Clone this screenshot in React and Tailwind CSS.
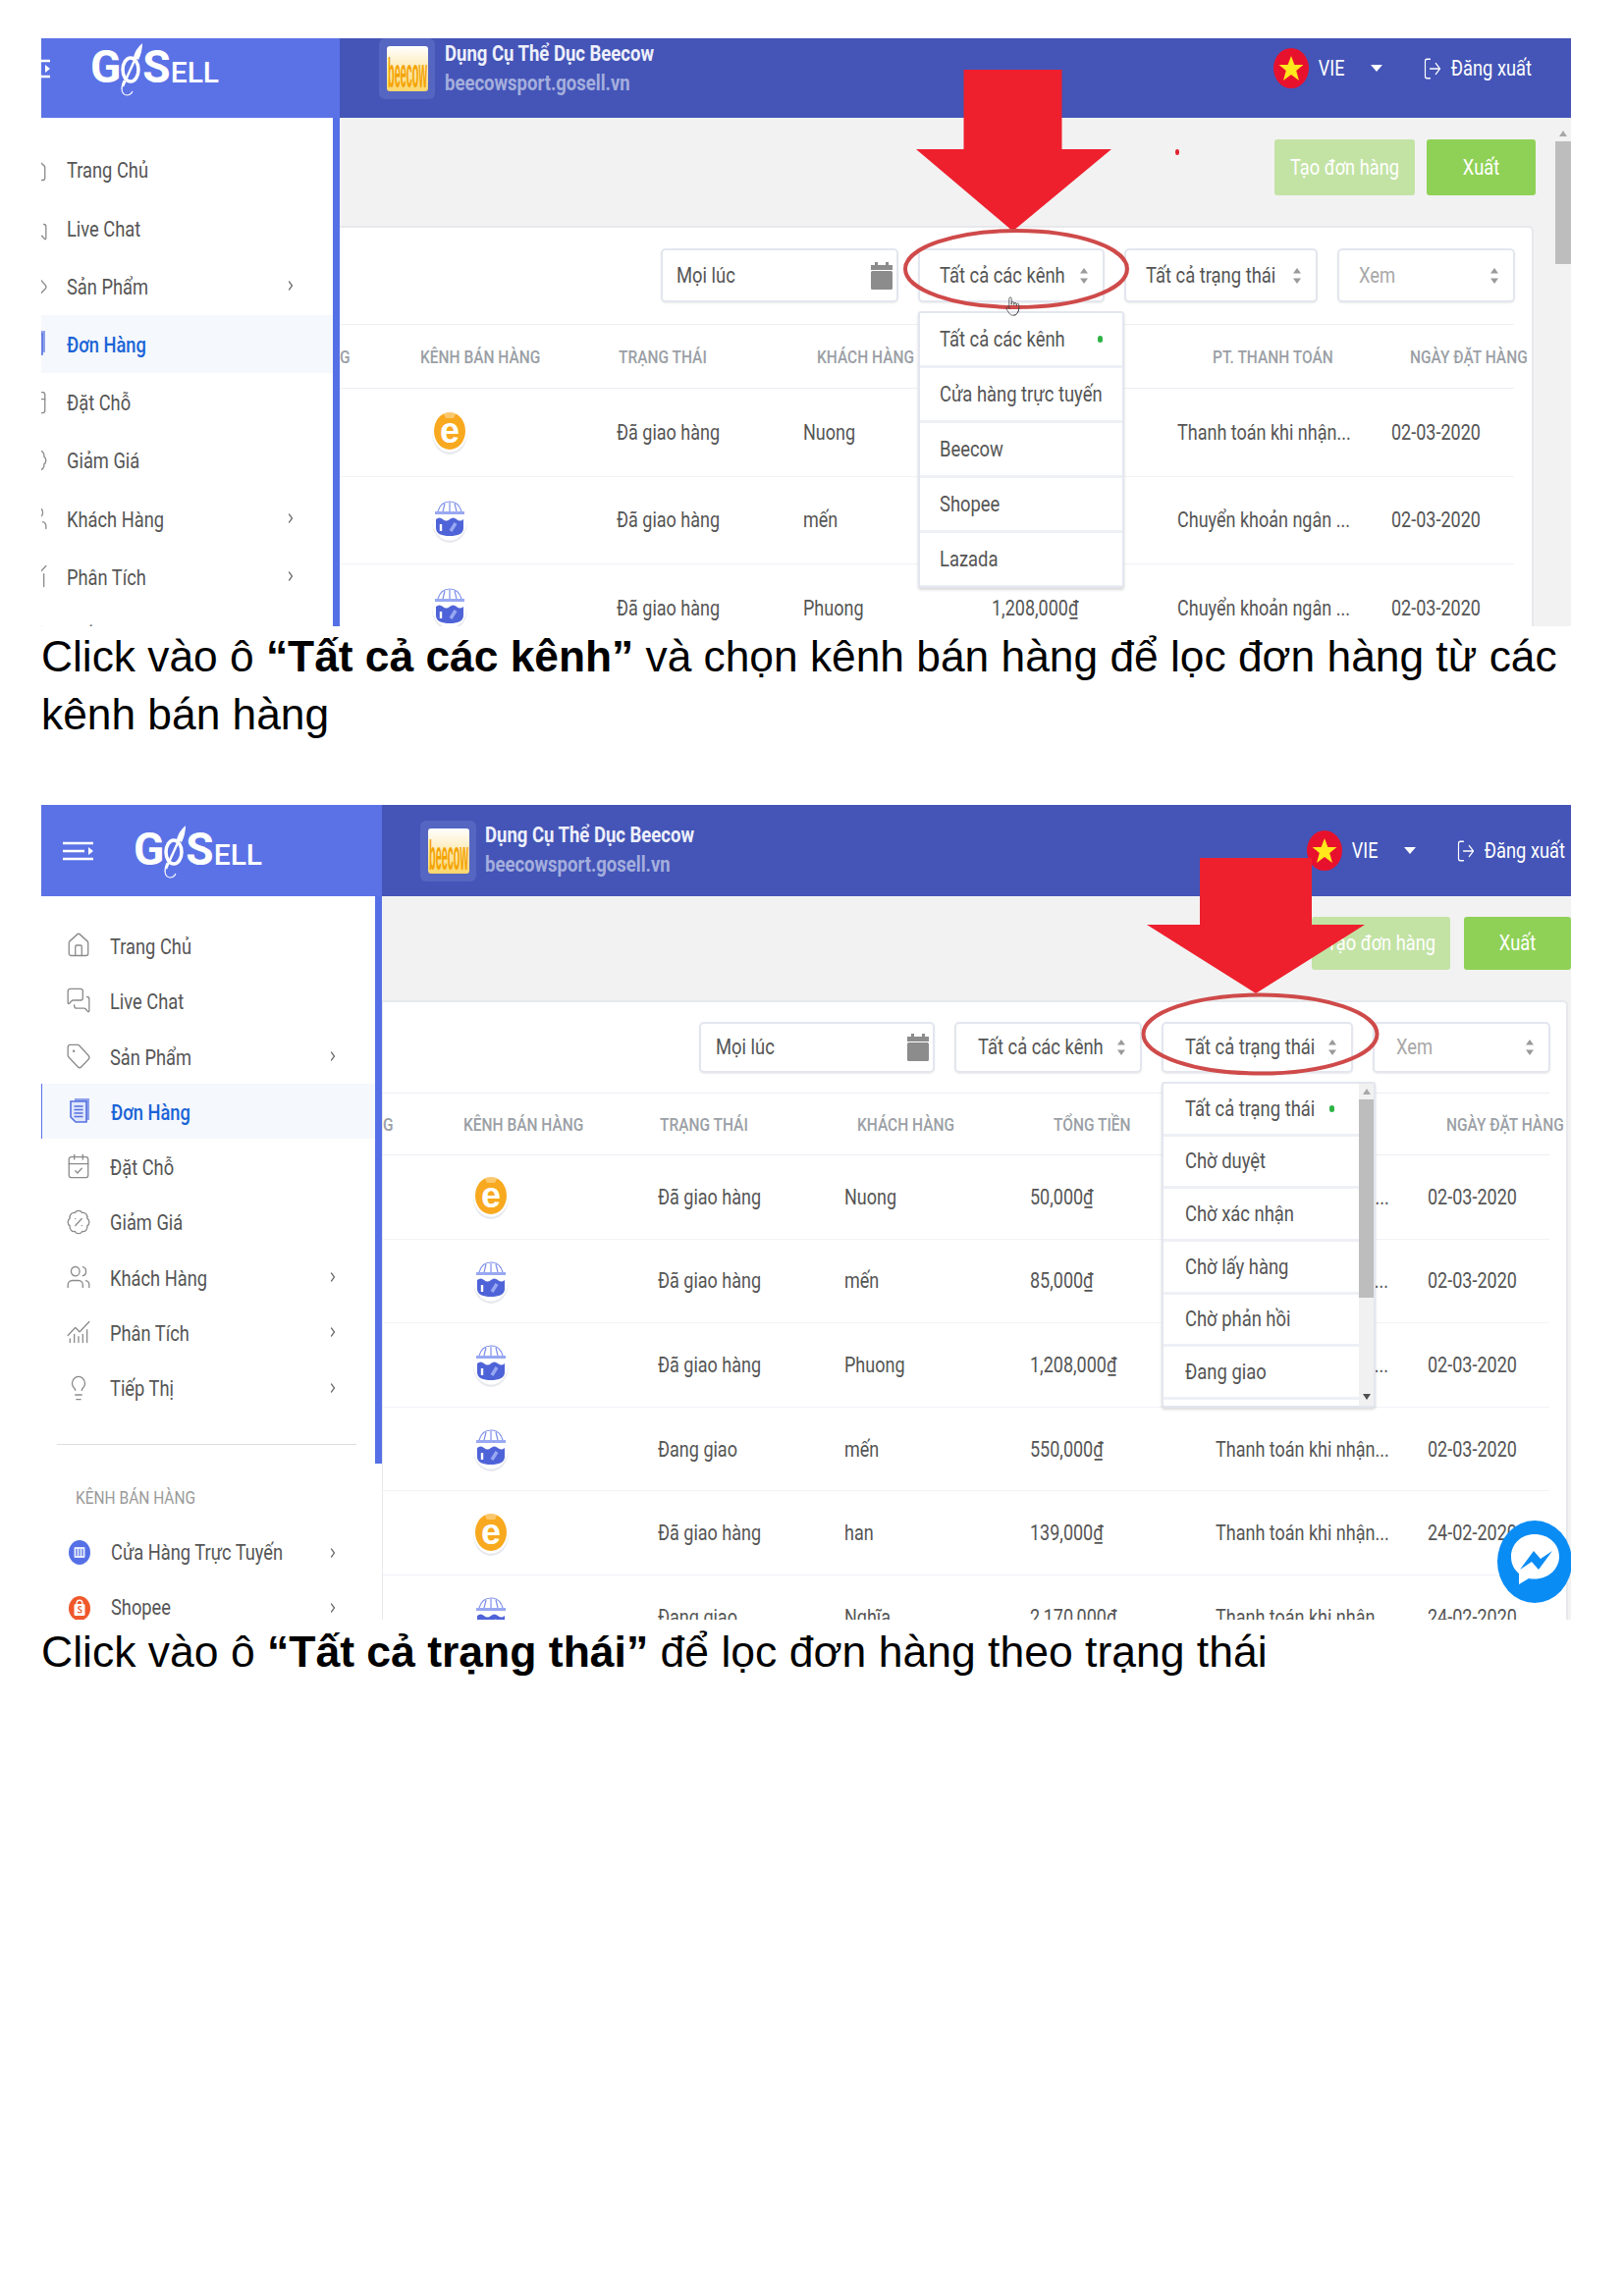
import React from 'react';
import {
    BadgePercent, CalendarCheck, ChartNoAxesCombined, ChevronRight, Home, Lightbulb,
    LogOut, MessagesSquare, Pointer, Tag, Users
} from 'lucide-react';

// all text in the source is stretched vertically, so text gets a fixed y scale
function T({ className = '', children }) {
    return <span className={`inline-block scale-y-[1.22] whitespace-nowrap ${className}`}>{children}</span>;
}

function OrdersIcon({ className }) {
    return (
        <svg className={className} viewBox="0 0 26 28" preserveAspectRatio="none">
            <path d="M8 1h15v22h-3V4H8z" fill="#8ea2ec" />
            <path d="M4 4h16v21H9l-5-5z" fill="#dfe6fb" stroke="#5570e0" strokeWidth="1.6" />
            <path d="M7.500 9h9M7.500 12.500h9M7.500 16h9M7.500 19.500h9" stroke="#5570e0" strokeWidth="1.5" />
        </svg>
    );
}

const MENU = [
    { label: 'Trang Chủ', icon: Home },
    { label: 'Live Chat', icon: MessagesSquare },
    { label: 'Sản Phẩm', icon: Tag, more: true },
    { label: 'Đơn Hàng', icon: OrdersIcon, active: true },
    { label: 'Đặt Chỗ', icon: CalendarCheck },
    { label: 'Giảm Giá', icon: BadgePercent },
    { label: 'Khách Hàng', icon: Users, more: true },
    { label: 'Phân Tích', icon: ChartNoAxesCombined, more: true },
    { label: 'Tiếp Thị', icon: Lightbulb, more: true }
];

const COD = 'Thanh toán khi nhận...';
const BANK = 'Chuyển khoản ngân ...';

const ORDERS = [
    { channel: 'beecow', status: 'Đã giao hàng', customer: 'Nuong', total: '50,000₫', pay: COD, date: '02-03-2020' },
    { channel: 'store', status: 'Đã giao hàng', customer: 'mến', total: '85,000₫', pay: BANK, date: '02-03-2020' },
    { channel: 'store', status: 'Đã giao hàng', customer: 'Phuong', total: '1,208,000₫', pay: BANK, date: '02-03-2020' },
    { channel: 'store', status: 'Đang giao', customer: 'mến', total: '550,000₫', pay: COD, date: '02-03-2020' },
    { channel: 'beecow', status: 'Đã giao hàng', customer: 'han', total: '139,000₫', pay: COD, date: '24-02-2020' },
    { channel: 'store', status: 'Đang giao', customer: 'Nghĩa', total: '2,170,000₫', pay: COD, date: '24-02-2020' }
];

const FIRST = {
    panel: 'h-[599px]',
    header: 'h-[81px] pb-[20px]',
    brand: 'w-[304px] h-[81px] pb-[20px]',
    burger: '-ml-[22px]',
    shop: 'pl-[40px] gap-[10px]',
    names: 'mt-[3px]',
    account: 'pr-[40px]',
    sideWidth: 'w-[304px]',
    nav: 'pt-[23px]',
    row: 'h-[59.2px]',
    rowIcon: '-ml-[19px]',
    active: '',
    bar: 'h-full',
    main: '',
    topbar: 'h-[110px] pt-[22px] pr-[20px]',
    createBtn: 'w-[143px] h-[57px]',
    exportBtn: 'w-[111px] h-[57px] ml-[12px]',
    card: 'mr-[22px]',
    filters: 'pt-[21px] pb-[22px] pr-[17px] gap-[20px]',
    filterH: 'h-[55px]',
    filterW: ['w-[242px]', 'w-[190px]', 'w-[197px]', 'w-[181px]'],
    selectPad: 'pl-[20px]',
    datePad: '!pl-[14px]',
    table: 'mr-[18px]',
    head: 'h-[66px] pt-[3px] grid-cols-[82px_202px_202px_202px_201px_201px_minmax(0,1fr)]',
    cells: 'h-[89.5px] grid-cols-[282px_190px_192px_189px_218px_minmax(0,1fr)]',
    iconCell: 'pl-[94px] mt-[2px]'
};

const SECOND = {
    panel: 'h-[830px]',
    header: 'h-[93px]',
    brand: 'w-[347px] h-[93px]',
    burger: 'ml-[22px]',
    shop: 'pl-[39px] gap-[9px]',
    names: '',
    account: 'pr-[6px]',
    sideWidth: 'w-[347px]',
    nav: 'pt-[22px]',
    row: 'h-[56.3px]',
    rowIcon: 'ml-[25px]',
    active: 'border-l border-[#5b72e6]',
    bar: 'h-[578px]',
    main: 'border-b-2 border-[#e4e4e4]',
    topbar: 'h-[106px] pt-[21px]',
    createBtn: 'w-[141px] h-[54px]',
    exportBtn: 'w-[109px] h-[54px] ml-[14px]',
    card: 'mr-[3px] border-l',
    filters: 'pt-[20px] pb-[20px] pr-[16px] gap-[20px]',
    filterH: 'h-[52px]',
    filterW: ['w-[240px]', 'w-[191px]', 'w-[195px]', 'w-[181px]'],
    selectPad: 'pl-[22px]',
    datePad: '!pl-[15px]',
    table: 'mr-[17px]',
    head: 'h-[64px] pt-[3px] grid-cols-[82px_200px_201px_200px_201px_199px_minmax(0,1fr)]',
    cells: 'h-[85.6px] grid-cols-[280px_190px_189px_189px_216px_minmax(0,1fr)]',
    iconCell: 'pl-[92px] mt-[2px]'
};

function Burger({ className }) {
    return (
        <svg className={className} width="31" height="20" viewBox="0 0 31 20" fill="none">
            <path d="M0 2h31M0 10h22M0 18h31" stroke="#fff" strokeWidth="2.4" />
            <path d="M26 6l5 4-5 4z" fill="#fff" />
        </svg>
    );
}

function Logo() {
    return (
        <div className="relative -mt-[5px] flex items-end text-white h-[40px]">
            <span className="text-[46px] leading-[38px] font-bold">G</span>
            <svg width="24" height="54" viewBox="0 0 24 54" fill="none" className="-mb-[11px] -mx-[1px]">
                <ellipse cx="11" cy="27" rx="8" ry="12" stroke="#fff" strokeWidth="3.5" />
                <path d="M3 44L18 11" stroke="#fff" strokeWidth="2.4" />
                <path d="M14 14Q16 6 23 0q0 9-4 17z" fill="#fff" />
                <path d="M4 38c-3 7-3 14 3 15 3 0 5-2 6-4" stroke="#fff" strokeWidth="1.1" />
            </svg>
            <span className="text-[46px] leading-[38px] font-bold">S</span>
            <span className="text-[30px] leading-[27px] font-medium">ELL</span>
        </div>
    );
}

function ShopTile({ className }) {
    return (
        <div className={`flex items-center justify-center rounded-md bg-[#5565c2] ${className}`}>
            <svg width="42" height="46" viewBox="0 0 42 46">
                <defs>
                    <linearGradient id="tile" x1="0" y1="0" x2="0" y2="1">
                        <stop offset="0" stopColor="#ffffff" />
                        <stop offset="1" stopColor="#fbd66a" />
                    </linearGradient>
                </defs>
                <rect width="42" height="46" rx="3" fill="url(#tile)" />
                <text
                    transform="scale(1,3.3)"
                    x="21"
                    y="12.800"
                    textAnchor="middle"
                    textLength="40"
                    lengthAdjust="spacingAndGlyphs"
                    fontFamily="Liberation Sans, sans-serif"
                    fontWeight="700"
                    fontSize="13"
                    fill="#f4a300"
                >
                    beecow
                </text>
            </svg>
        </div>
    );
}

function Flag() {
    return (
        <svg width="36" height="41" viewBox="0 0 36 41">
            <ellipse cx="18" cy="20.5" rx="18" ry="20.5" fill="#e8112d" />
            <path d="M18 8l3.4 9h9l-7.2 6 2.8 10L18 27l-8 6 2.8-10-7.2-6h9z" fill="#ffe81c" />
        </svg>
    );
}

function SortArrows({ className = '' }) {
    return (
        <svg className={className} width="8" height="16" viewBox="0 0 8 16">
            <path d="M4 0l4 5.5H0zM4 16l4-5.5H0z" fill="#9a9a9a" />
        </svg>
    );
}

function ChannelIcon({ type }) {
    if (type === 'beecow') {
        return (
            <svg width="36" height="44" viewBox="0 0 36 44">
                <ellipse cx="18" cy="22.5" rx="18" ry="21.5" fill="#e7e9ee" />
                <ellipse cx="18" cy="20.5" rx="18" ry="21" fill="#fff" />
                <ellipse cx="18" cy="20" rx="16" ry="19" fill="#f8a91f" />
                <path d="M11 1h14l-3 6h-8z" fill="#fff" opacity="0.35" />
                <text x="18" y="32" textAnchor="middle" fontFamily="Liberation Sans, sans-serif" fontWeight="700" fontSize="36" fill="#fff">e</text>
            </svg>
        );
    }
    return (
        <svg width="36" height="44" viewBox="0 0 36 44">
            <ellipse cx="18" cy="22.5" rx="18" ry="21.5" fill="#e7e9ee" />
            <ellipse cx="18" cy="20.5" rx="18" ry="21" fill="#fff" />
            <path d="M6 12C8 5 13 2 18 2s10 3 12 10" fill="none" stroke="#7d8eea" strokeWidth="1.2" />
            <path d="M11 12l2-8M18 12V3M25 12l-2-8" stroke="#7d8eea" strokeWidth="1.2" />
            <rect x="3" y="12" width="30" height="3" fill="#98a8f2" />
            <path d="M4 20q3.500-3 7 0t7 0 7 0 7 0v9c0 6-6 8-14 8S4 35 4 29z" fill="#4f63d8" />
            <path d="M9 25v7" stroke="#fff" strokeWidth="2.4" />
            <path d="M19 32l5-8" stroke="#98a8f2" strokeWidth="3.4" />
        </svg>
    );
}

function StoreDot() {
    return (
        <svg width="22" height="25" viewBox="0 0 22 25">
            <ellipse cx="11" cy="12.5" rx="11" ry="12.5" fill="#5570e6" />
            <rect x="5.5" y="7" width="11" height="11" rx="1" fill="#fff" opacity="0.85" />
            <path d="M8 9v7M11 9v7M14 9v7" stroke="#5570e6" strokeWidth="1.2" />
        </svg>
    );
}

function ShopeeDot() {
    return (
        <svg width="22" height="25" viewBox="0 0 22 25">
            <ellipse cx="11" cy="12.5" rx="11" ry="12.5" fill="#f0582b" />
            <rect x="5.5" y="8" width="11" height="12" rx="1.5" fill="#fff" />
            <path d="M8 8c0-5 6-5 6 0" fill="none" stroke="#fff" strokeWidth="1.3" />
            <path d="M13 11c-2-1-4 0-3 1.600s3 1 3 2.800-2.600 1.600-4 .6" fill="none" stroke="#f0582b" strokeWidth="1.2" />
        </svg>
    );
}

function Chevron() {
    return <ChevronRight className="ml-auto mr-[37px] w-[12px] h-[16px] text-[#666]" strokeWidth={2.4} preserveAspectRatio="none" />;
}

function Sidebar({ cfg, channels }) {
    return (
        <aside className={`flex shrink-0 bg-white ${cfg.sideWidth}`}>
            <div className={`flex-1 min-w-0 ${cfg.nav}`}>
                {MENU.map((item) => {
                    const Icon = item.icon;
                    return (
                        <div key={item.label} className={`flex items-center ${cfg.row} ${item.active ? `bg-[#f5f8fd] ${cfg.active}` : ''}`}>
                            <Icon
                                preserveAspectRatio="none"
                                strokeWidth={1.2}
                                className={`w-[26px] h-[28px] shrink-0 text-[#8a8a8a] ${cfg.rowIcon}`}
                            />
                            <T className={`ml-[19px] mt-[3px] text-[18.3px] ${item.active ? 'font-medium text-[#1a64d6]' : 'text-[#555]'}`}>{item.label}</T>
                            {item.more && <Chevron />}
                        </div>
                    );
                })}
                {channels && (
                    <>
                        <div className="mt-[29px] ml-[16px] w-[305px] border-t border-[#dedede]" />
                        <div className="flex items-center h-[82px] pt-[28px] pl-[35px]">
                            <T className="text-[15.5px] text-[#9a9a9a]">KÊNH BÁN HÀNG</T>
                        </div>
                        <div className={`flex items-center ${cfg.row} pl-[28px]`}>
                            <StoreDot />
                            <T className="ml-[21px] text-[18.3px] text-[#555]">Cửa Hàng Trực Tuyến</T>
                            <Chevron />
                        </div>
                        <div className={`flex items-center ${cfg.row} pl-[28px]`}>
                            <ShopeeDot />
                            <T className="ml-[21px] text-[18.3px] text-[#555]">Shopee</T>
                            <Chevron />
                        </div>
                    </>
                )}
            </div>
            <div className={`w-[7px] shrink-0 bg-[#5570e6] ${cfg.bar}`} />
        </aside>
    );
}

function Select({ className, label, muted, icon, children }) {
    return (
        <div className={`relative flex items-center justify-between rounded-[5px] border-2 border-[#e3e6ee] bg-white pr-[15px] shadow-[0_1px_2px_rgba(0,0,0,0.08)] ${className}`}>
            <T className={`text-[18.4px] ${muted ? 'text-[#a8a8a8]' : 'text-[#555]'}`}>{label}</T>
            {icon || <SortArrows />}
            {children}
        </div>
    );
}

function Scrollbar({ className, thumb }) {
    return (
        <div className={`flex flex-col items-center bg-[#f1f1f1] ${className}`}>
            <span className="mt-[5px] mb-[5px] h-0 w-0 border-x-[4px] border-b-[6px] border-x-transparent border-b-[#a8a8a8]" />
            <div className={`w-full bg-[#bdbdbd] ${thumb}`} />
            <span className="mt-auto mb-[6px] h-0 w-0 border-x-[4px] border-t-[6px] border-x-transparent border-t-[#505050]" />
        </div>
    );
}

function OrderTable({ cfg, channelMenu, statusMenu }) {
    return (
        <div className={`flex-1 min-h-0 rounded-tr-[5px] border-t-2 border-r-2 border-[#e6e8ec] bg-white ${cfg.card}`}>
            <div className={`flex justify-end ${cfg.filters}`}>
                <Select
                    className={`${cfg.filterH} ${cfg.filterW[0]} ${cfg.datePad} !pr-[4px]`}
                    label="Mọi lúc"
                    icon={
                        <svg width="22" height="28" viewBox="0 0 22 28">
                            <path d="M4 0h3v4H4zM15 0h3v4h-3z" fill="#8c8c8c" />
                            <path d="M0 3h22v5H0z" fill="#8c8c8c" />
                            <rect y="9" width="22" height="19" rx="1.5" fill="#8c8c8c" />
                        </svg>
                    }
                />
                <Select className={`${cfg.filterH} ${cfg.filterW[1]} ${cfg.selectPad}`} label="Tất cả các kênh">{channelMenu}</Select>
                <Select className={`${cfg.filterH} ${cfg.filterW[2]} ${cfg.selectPad}`} label="Tất cả trạng thái">{statusMenu}</Select>
                <Select className={`${cfg.filterH} ${cfg.filterW[3]} ${cfg.selectPad}`} label="Xem" muted />
            </div>
            <div className={cfg.table}>
                <div className={`grid items-center border-y border-[#eceef3] text-[15.5px] font-medium text-[#9b9fa6] ${cfg.head}`}>
                    <T>G</T>
                    <T>KÊNH BÁN HÀNG</T>
                    <T>TRẠNG THÁI</T>
                    <T>KHÁCH HÀNG</T>
                    <T>TỔNG TIỀN</T>
                    <T>PT. THANH TOÁN</T>
                    <T>NGÀY ĐẶT HÀNG</T>
                </div>
                {ORDERS.map((o, i) => (
                    <div key={i} className={`grid items-center border-b border-[#f1f3f7] text-[18px] text-[#555] ${cfg.cells}`}>
                        <div className={cfg.iconCell}><ChannelIcon type={o.channel} /></div>
                        <T>{o.status}</T>
                        <T>{o.customer}</T>
                        <T>{o.total}</T>
                        <T>{o.pay}</T>
                        <T>{o.date}</T>
                    </div>
                ))}
            </div>
        </div>
    );
}

function Screen({ cfg, channels, scrollbar, channelMenu, statusMenu, children }) {
    return (
        <div className={`relative ml-[42px] w-[1558px] overflow-hidden font-[Roboto,sans-serif] ${cfg.panel}`}>
            <header className={`flex items-center bg-[#4455b7] ${cfg.header}`}>
                <div className={`flex shrink-0 items-center gap-[41px] self-start bg-[#5b72e6] ${cfg.brand}`}>
                    <Burger className={`shrink-0 ${cfg.burger}`} />
                    <Logo />
                </div>
                <div className={`flex flex-1 items-center justify-between ${cfg.account}`}>
                    <div className={`flex items-center ${cfg.shop}`}>
                        <ShopTile className="w-[57px] h-[62px]" />
                        <div className={`flex flex-col gap-[2px] ${cfg.names}`}>
                            <T className="text-[18.5px] font-bold text-[#eef0fb]">Dụng Cụ Thể Dục Beecow</T>
                            <T className="text-[18.5px] font-bold text-[#a4aedd]">beecowsport.gosell.vn</T>
                        </div>
                    </div>
                    <div className="flex items-center text-white">
                        <Flag />
                        <T className="ml-[10px] w-[27px] text-[18px]">VIE</T>
                        <span className="ml-[26px] h-0 w-0 border-x-[6px] border-t-[7px] border-x-transparent border-t-white" />
                        <LogOut className="ml-[41px] w-[20px] h-[26px]" strokeWidth={1.4} preserveAspectRatio="none" />
                        <T className="ml-[9px] text-[18.3px]">Đăng xuất</T>
                    </div>
                </div>
            </header>
            <div className="flex h-full">
                <Sidebar cfg={cfg} channels={channels} />
                <main className={`flex min-w-0 flex-1 bg-[#f2f2f2] ${cfg.main}`}>
                    <div className="flex min-w-0 flex-1 flex-col">
                        <div className={`flex shrink-0 justify-end ${cfg.topbar}`}>
                            <button className={`rounded-[3px] bg-[#c3e3a5] text-[18.3px] text-white ${cfg.createBtn}`}><T>Tạo đơn hàng</T></button>
                            <button className={`rounded-[3px] bg-[#8fd156] text-[18.3px] text-white ${cfg.exportBtn}`}><T>Xuất</T></button>
                        </div>
                        <OrderTable cfg={cfg} channelMenu={channelMenu} statusMenu={statusMenu} />
                    </div>
                    {scrollbar}
                </main>
            </div>
            {children}
        </div>
    );
}

function Callout({ arrow, ellipse, children }) {
    return (
        <svg className="pointer-events-none absolute inset-0 z-20 h-full w-full">
            <polygon points={arrow} fill="#ee202e" />
            <ellipse {...ellipse} fill="none" stroke="#cf4a4a" strokeWidth="4" />
            {children}
        </svg>
    );
}

export default function App() {
    return (
        <div className="min-h-[2339px] bg-white pt-[39px] text-black">
            <Screen
                cfg={FIRST}
                scrollbar={<Scrollbar className="mt-[8px] w-[16px] shrink-0 !bg-transparent" thumb="h-[125px]" />}
                channelMenu={
                    <div className="absolute -left-[2px] top-[calc(100%+11px)] z-10 h-[282px] w-[210px] overflow-hidden rounded-[3px] border-2 border-[#e3e6ee] bg-white shadow-[0_2px_3px_rgba(0,0,0,0.15)]">
                        {['Tất cả các kênh', 'Cửa hàng trực tuyến', 'Beecow', 'Shopee', 'Lazada'].map((item, i) => (
                            <div key={item} className="flex h-[56px] items-center justify-between border-b-[3px] border-[#eef0f6] px-[20px]">
                                <T className="text-[18.4px] text-[#555]">{item}</T>
                                {i === 0 && <span className="h-[7px] w-[5px] rounded-full bg-[#2fb344]" />}
                            </div>
                        ))}
                    </div>
                }
            >
                <Callout
                    arrow="939.500,32 1039.500,32 1039.500,113 1090,113 989.500,196.500 891,113 939.500,113"
                    ellipse={{ cx: 993, cy: 235, rx: 113, ry: 39 }}
                >
                    <ellipse cx="1157" cy="116" rx="2" ry="3" fill="#e3202e" />
                </Callout>
                <Pointer className="absolute left-[982px] top-[262px] z-30 w-[15px] h-[22px] text-[#444]" strokeWidth={1} preserveAspectRatio="none" />
            </Screen>
            <p className="mt-[1px] ml-[42px] whitespace-nowrap font-['Liberation_Sans',Arial,sans-serif] text-[44.3px] leading-[59px]">
                Click vào ô <b>“Tất cả các kênh”</b> và chọn kênh bán hàng để lọc đơn hàng từ các<br />kênh bán hàng
            </p>
            <div className="mt-[63px]">
                <Screen
                    cfg={SECOND}
                    channels
                    statusMenu={
                        <div className="absolute -left-[2px] top-[calc(100%+11px)] z-10 flex h-[332px] w-[218px] overflow-hidden rounded-[3px] border-2 border-[#e3e6ee] bg-white shadow-[0_2px_3px_rgba(0,0,0,0.15)]">
                            <div className="min-w-0 flex-1">
                                {['Tất cả trạng thái', 'Chờ duyệt', 'Chờ xác nhận', 'Chờ lấy hàng', 'Chờ phản hồi', 'Đang giao'].map((item, i) => (
                                    <div key={item} className="flex h-[53.7px] items-center border-b-[3px] border-[#eef0f6] pl-[22px]">
                                        <T className="text-[18.4px] text-[#555]">{item}</T>
                                        {i === 0 && <span className="ml-[15px] h-[7px] w-[5px] rounded-full bg-[#2fb344]" />}
                                    </div>
                                ))}
                            </div>
                            <Scrollbar className="w-[15px] shrink-0" thumb="h-[202px]" />
                        </div>
                    }
                >
                    <Callout
                        arrow="1180,54 1294,54 1294,122 1348,122 1237,192 1126,122 1180,122"
                        ellipse={{ cx: 1241.5, cy: 233.5, rx: 119, ry: 40 }}
                    />
                    {/* messenger bubble */}
                    <svg className="absolute left-[1483px] top-[729px] z-30" width="76" height="84" viewBox="0 0 76 84">
                        <ellipse cx="38" cy="42" rx="38" ry="42" fill="#0a8cf5" />
                        <path d="M38 14c-14 0-24 10-24 23 0 8 3.500 13 8 17v11l10-6c2 .5 4 .5 6 .5 14 0 25-10 25-23S52 14 38 14z" fill="#fff" />
                        <path d="M23 50l14-19 7 8 12-8-14 19-7-8z" fill="#0a8cf5" />
                    </svg>
                </Screen>
                <p className="mt-[3px] ml-[42px] whitespace-nowrap font-['Liberation_Sans',Arial,sans-serif] text-[44.5px] leading-[59px]">
                    Click vào ô <b>“Tất cả trạng thái”</b> để lọc đơn hàng theo trạng thái
                </p>
            </div>
        </div>
    );
}
